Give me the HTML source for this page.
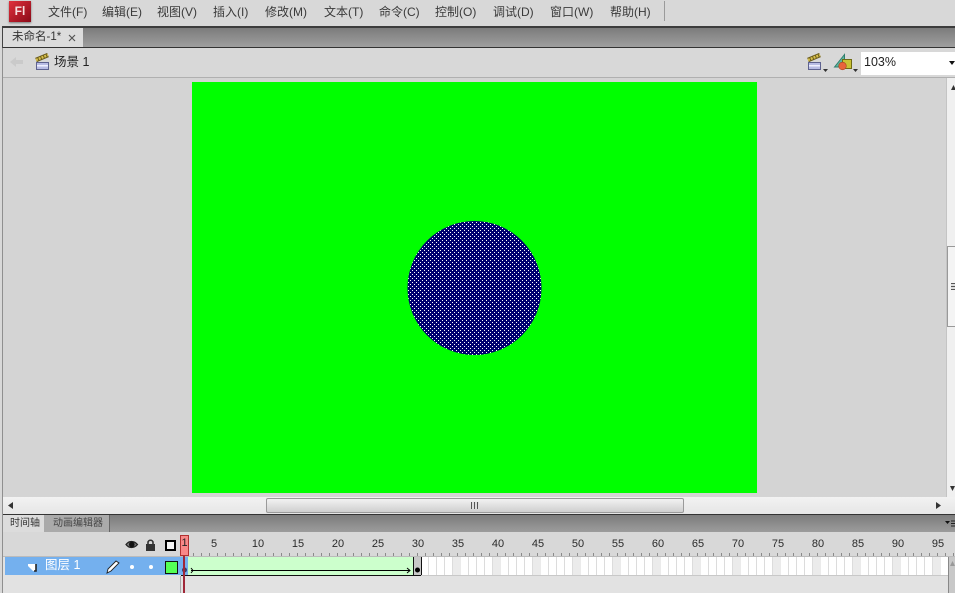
<!DOCTYPE html>
<html><head><meta charset="utf-8">
<style>
html,body{margin:0;padding:0;width:955px;height:593px;overflow:hidden;background:#d6d6d6;font-family:"Liberation Sans","Noto Sans CJK SC",sans-serif;}
.a{position:absolute;}
.m{position:absolute;top:4px;font-size:12px;line-height:16px;color:#3a3a3a;white-space:nowrap;}
.n{position:absolute;top:538px;font-size:11px;line-height:13px;color:#2a2a2a;width:24px;text-align:center;}
</style></head><body>
<div class="a" style="left:0;top:0;width:955px;height:27px;background:#d8d8d8"></div>
<div class="a" style="left:9px;top:1px;width:22px;height:21px;background:linear-gradient(135deg,#e0303c,#8a0a18);box-shadow:0 1px 2px #777;color:#f6e0e0;font-weight:bold;font-size:12px;line-height:20px;text-align:center">Fl</div>
<div class="m" style="left:48px">文件(F)</div>
<div class="m" style="left:102px">编辑(E)</div>
<div class="m" style="left:157px">视图(V)</div>
<div class="m" style="left:213px">插入(I)</div>
<div class="m" style="left:265px">修改(M)</div>
<div class="m" style="left:324px">文本(T)</div>
<div class="m" style="left:379px">命令(C)</div>
<div class="m" style="left:435px">控制(O)</div>
<div class="m" style="left:493px">调试(D)</div>
<div class="m" style="left:550px">窗口(W)</div>
<div class="m" style="left:610px">帮助(H)</div>
<div class="a" style="left:664px;top:1px;width:1px;height:20px;background:#9a9a9a"></div>
<div class="a" style="left:2px;top:26px;width:953px;height:2px;background:#3c3c3c"></div>
<div class="a" style="left:3px;top:28px;width:952px;height:19px;background:linear-gradient(#7c7c7c,#9e9e9e)"></div>
<div class="a" style="left:3px;top:28px;width:80px;height:19px;background:#dcdcdc"></div>
<div class="a" style="left:12px;top:30px;font-size:11.5px;line-height:15px;color:#333;white-space:nowrap">未命名-1*</div>
<svg class="a" style="left:68px;top:34px" width="9" height="9"><path d="M1 1L7 7M7 1L1 7" stroke="#555" stroke-width="1.2"/></svg>
<div class="a" style="left:2px;top:47px;width:953px;height:1px;background:#333"></div>
<div class="a" style="left:0;top:48px;width:955px;height:29px;background:#d8d8d8"></div>
<div class="a" style="left:3px;top:77px;width:952px;height:1px;background:#b0b0b0"></div>
<div class="a" style="left:0;top:28px;width:2px;height:565px;background:#d8d8d8"></div>
<div class="a" style="left:2px;top:28px;width:1px;height:20px;background:#444"></div>
<div class="a" style="left:2px;top:48px;width:1px;height:545px;background:#8f8f8f"></div>
<svg class="a" style="left:9px;top:55px" width="16" height="14"><path d="M1 7L7 2V5H14V9H7V12Z" fill="#cacaca"/></svg>
<svg class="a" style="left:34px;top:53px" width="17" height="18"><path d="M2 7L14 2" stroke="#6b5c1c" stroke-width="4.5"/><path d="M2 7L14 2" stroke="#d8c04c" stroke-width="2.5" stroke-dasharray="2 1"/><rect x="2.500" y="9.500" width="12" height="7" fill="#b8bce4" stroke="#5e628f"/><rect x="3" y="12" width="11" height="1.500" fill="#f0f0ff"/></svg>
<div class="a" style="left:54px;top:54px;font-size:12.5px;line-height:17px;color:#222;white-space:nowrap">场景 1</div>
<svg class="a" style="left:806px;top:53px" width="22" height="20"><path d="M2 7L14 2" stroke="#6b5c1c" stroke-width="4.5"/><path d="M2 7L14 2" stroke="#d8c04c" stroke-width="2.5" stroke-dasharray="2 1"/><rect x="2.500" y="9.500" width="12" height="7" fill="#b8bce4" stroke="#5e628f"/><rect x="3" y="12" width="11" height="1.500" fill="#f0f0ff"/><path d="M17 16h5l-2.500 3z" fill="#333"/></svg>
<svg class="a" style="left:833px;top:53px" width="26" height="20"><path d="M1.500 14L11.500 1.500V14Z" fill="#5cb8a0" stroke="#2f7c6c"/><rect x="9.500" y="6.500" width="9" height="9" fill="#c9c234" stroke="#6f6b14"/><circle cx="9.500" cy="13" r="3.800" fill="#e8643c" stroke="#a84420" stroke-width=".6"/><path d="M20 16h5l-2.500 3z" fill="#333"/></svg>
<div class="a" style="left:861px;top:52px;width:94px;height:23px;background:#fff"></div>
<div class="a" style="left:864px;top:55px;font-size:12.5px;line-height:15px;color:#222">103%</div>
<svg class="a" style="left:949px;top:61px" width="6" height="5"><path d="M0 0H6L3 4Z" fill="#111"/></svg>
<div class="a" style="left:3px;top:78px;width:943px;height:419px;background:#d4d4d4"></div>
<svg class="a" style="left:192px;top:82px" width="565" height="411">
<defs><pattern id="d" width="4" height="4" patternUnits="userSpaceOnUse"><rect width="4" height="4" fill="#000070"/><rect x="0" y="0" width="1" height="1" fill="#fff"/><rect x="2" y="2" width="1" height="1" fill="#fff"/></pattern></defs>
<rect width="565" height="411" fill="#00ff00"/>
<circle cx="282.500" cy="206" r="67" fill="url(#d)"/>
</svg>
<div class="a" style="left:946px;top:78px;width:9px;height:419px;background:#f0f0f0;border-left:1px solid #c4c4c4;box-sizing:border-box"></div>
<svg class="a" style="left:951px;top:85px" width="5" height="6"><path d="M2.500 0L5 5H0Z" fill="#333"/></svg>
<div class="a" style="left:947px;top:246px;width:8px;height:81px;background:#f4f4f4;border:1px solid #999;border-right:0;box-sizing:border-box"></div>
<div class="a" style="left:951px;top:283px;width:4px;height:7px;background:repeating-linear-gradient(#555 0 1px,#ddd 1px 3px)"></div>
<svg class="a" style="left:950px;top:486px" width="5" height="6"><path d="M0 0H5L2.500 5Z" fill="#333"/></svg>
<div class="a" style="left:3px;top:497px;width:952px;height:17px;background:linear-gradient(#f2f2f2,#e6e6e6)"></div>
<svg class="a" style="left:8px;top:502px" width="6" height="8"><path d="M5 0V7L0 3.500Z" fill="#333"/></svg>
<svg class="a" style="left:936px;top:502px" width="6" height="8"><path d="M0 0V7L5 3.500Z" fill="#333"/></svg>
<div class="a" style="left:266px;top:498px;width:418px;height:15px;background:linear-gradient(#f2f2f2,#cfcfcf);border:1px solid #9a9a9a;border-radius:2px;box-sizing:border-box"></div>
<div class="a" style="left:471px;top:502px;width:8px;height:7px;background:repeating-linear-gradient(90deg,#555 0 1px,#ddd 1px 3px)"></div>
<div class="a" style="left:3px;top:514px;width:952px;height:1px;background:#333"></div>
<div class="a" style="left:3px;top:515px;width:952px;height:17px;background:linear-gradient(#7c7c7c,#9c9c9c)"></div>
<div class="a" style="left:3px;top:515px;width:41px;height:17px;background:#dcdcdc"></div>
<div class="a" style="left:10px;top:517px;font-size:10px;line-height:13px;color:#333;white-space:nowrap">时间轴</div>
<div class="a" style="left:44px;top:515px;width:66px;height:17px;background:#aaa;border-right:1px solid #666;box-sizing:border-box"></div>
<div class="a" style="left:53px;top:517px;font-size:10px;line-height:13px;color:#444;white-space:nowrap">动画编辑器</div>
<svg class="a" style="left:945px;top:520px" width="10" height="8"><path d="M0 1H5L2.500 4Z" fill="#111"/><path d="M6 1H10M6 3.500H10M6 6H10" stroke="#222"/></svg>
<div class="a" style="left:3px;top:532px;width:952px;height:61px;background:#e2e2e2"></div>
<div class="a" style="left:3px;top:532px;width:952px;height:24px;background:#d8d8d8"></div>
<div class="a" style="left:3px;top:556px;width:952px;height:1px;background:#bbb"></div>
<svg class="a" style="left:181px;top:551px" width="774" height="5"><defs><pattern id="t" width="8" height="5" patternUnits="userSpaceOnUse"><rect x="4" y="2" width="1" height="3" fill="#8a8a8a"/></pattern></defs><rect width="774" height="5" fill="url(#t)"/></svg>
<div class="n" style="left:202px">5</div><div class="n" style="left:246px">10</div><div class="n" style="left:286px">15</div><div class="n" style="left:326px">20</div><div class="n" style="left:366px">25</div><div class="n" style="left:406px">30</div><div class="n" style="left:446px">35</div><div class="n" style="left:486px">40</div><div class="n" style="left:526px">45</div><div class="n" style="left:566px">50</div><div class="n" style="left:606px">55</div><div class="n" style="left:646px">60</div><div class="n" style="left:686px">65</div><div class="n" style="left:726px">70</div><div class="n" style="left:766px">75</div><div class="n" style="left:806px">80</div><div class="n" style="left:846px">85</div><div class="n" style="left:886px">90</div><div class="n" style="left:926px">95</div>
<svg class="a" style="left:125px;top:539px" width="52" height="13"><path d="M1 5.500C4 1.500 9 1.500 12.500 5.500C9 9.500 4 9.500 1 5.500Z" fill="#777" stroke="#222" stroke-width="1.200"/><circle cx="6.800" cy="5.500" r="2.800" fill="#111"/><rect x="21" y="5" width="9" height="7" fill="#333"/><path d="M23 5V3.500C23 .5 28 .5 28 3.500V5" fill="none" stroke="#333" stroke-width="1.600"/><rect x="41" y="2" width="9" height="9" fill="#f4f4f4" stroke="#000" stroke-width="2"/></svg>
<div class="a" style="left:5px;top:557px;width:176px;height:18px;background:#74b0ee"></div>
<svg class="a" style="left:27px;top:561px" width="11" height="11"><path d="M1 3H9V10H6L1 5Z" fill="#fff"/><path d="M9 3V10H7" fill="none" stroke="#222" stroke-width="1.600"/></svg>
<div class="a" style="left:45px;top:558px;font-size:12.5px;line-height:15px;color:#fff;white-space:nowrap">图层 1</div>
<svg class="a" style="left:105px;top:559px" width="15" height="15"><path d="M2 14L3 10L11 2L14 4L6 12Z" fill="#fff" stroke="#222" stroke-width=".9"/></svg>
<div class="a" style="left:130px;top:565px;width:4px;height:4px;background:#fff;border-radius:50%"></div>
<div class="a" style="left:149px;top:565px;width:4px;height:4px;background:#fff;border-radius:50%"></div>
<div class="a" style="left:165px;top:561px;width:11px;height:11px;background:#55ff55;border:1px solid #111"></div>
<svg class="a" style="left:181px;top:557px" width="774" height="19">
<defs><pattern id="f" width="8" height="18" patternUnits="userSpaceOnUse"><rect width="8" height="18" fill="#fff"/><rect x="7" width="1" height="18" fill="#dcdcdc"/></pattern></defs>
<rect width="767" height="18" fill="url(#f)"/>
<rect x="272" width="8" height="18" fill="#ebebeb"/><rect x="312" width="8" height="18" fill="#ebebeb"/><rect x="352" width="8" height="18" fill="#ebebeb"/><rect x="392" width="8" height="18" fill="#ebebeb"/><rect x="432" width="8" height="18" fill="#ebebeb"/><rect x="472" width="8" height="18" fill="#ebebeb"/><rect x="512" width="8" height="18" fill="#ebebeb"/><rect x="552" width="8" height="18" fill="#ebebeb"/><rect x="592" width="8" height="18" fill="#ebebeb"/><rect x="632" width="8" height="18" fill="#ebebeb"/><rect x="672" width="8" height="18" fill="#ebebeb"/><rect x="712" width="8" height="18" fill="#ebebeb"/><rect x="752" width="8" height="18" fill="#ebebeb"/>
<rect width="232" height="18" fill="#ccffcc"/>
<rect width="7" height="18" fill="#74b0ee"/>
<rect y="18" width="767" height="1" fill="#c8c8c8"/>
<rect y="18" width="240" height="1" fill="#111"/>
<rect x="232" width="8" height="18" fill="#c8c8c8"/>
<rect x="232" width="1" height="18" fill="#111"/><rect x="240" width="1" height="18" fill="#111"/>
<circle cx="236.500" cy="13" r="2.500" fill="#000"/>
<circle cx="3.500" cy="13" r="2.500" fill="#33416e"/>
<path d="M10 13.500H229M10 11L12 13.500L10 16M226 11L229 13.500L226 16" fill="none" stroke="#000"/>
</svg>
<div class="a" style="left:948px;top:557px;width:7px;height:36px;background:#c8c8c8;border-left:1px solid #888;box-sizing:border-box"></div>
<svg class="a" style="left:950px;top:561px" width="5" height="6"><path d="M2.500 0L5 5H0Z" fill="#999"/></svg>
<div class="a" style="left:183px;top:556px;width:2px;height:37px;background:#a02838"></div>
<div class="a" style="left:180px;top:535px;width:9px;height:21px;background:#f88888;border:1px solid #b03030;box-sizing:border-box;font-size:11px;line-height:15px;text-align:center;color:#222">1</div>
<div class="a" style="left:180px;top:576px;width:1px;height:17px;background:#aaa"></div>
</body></html>
